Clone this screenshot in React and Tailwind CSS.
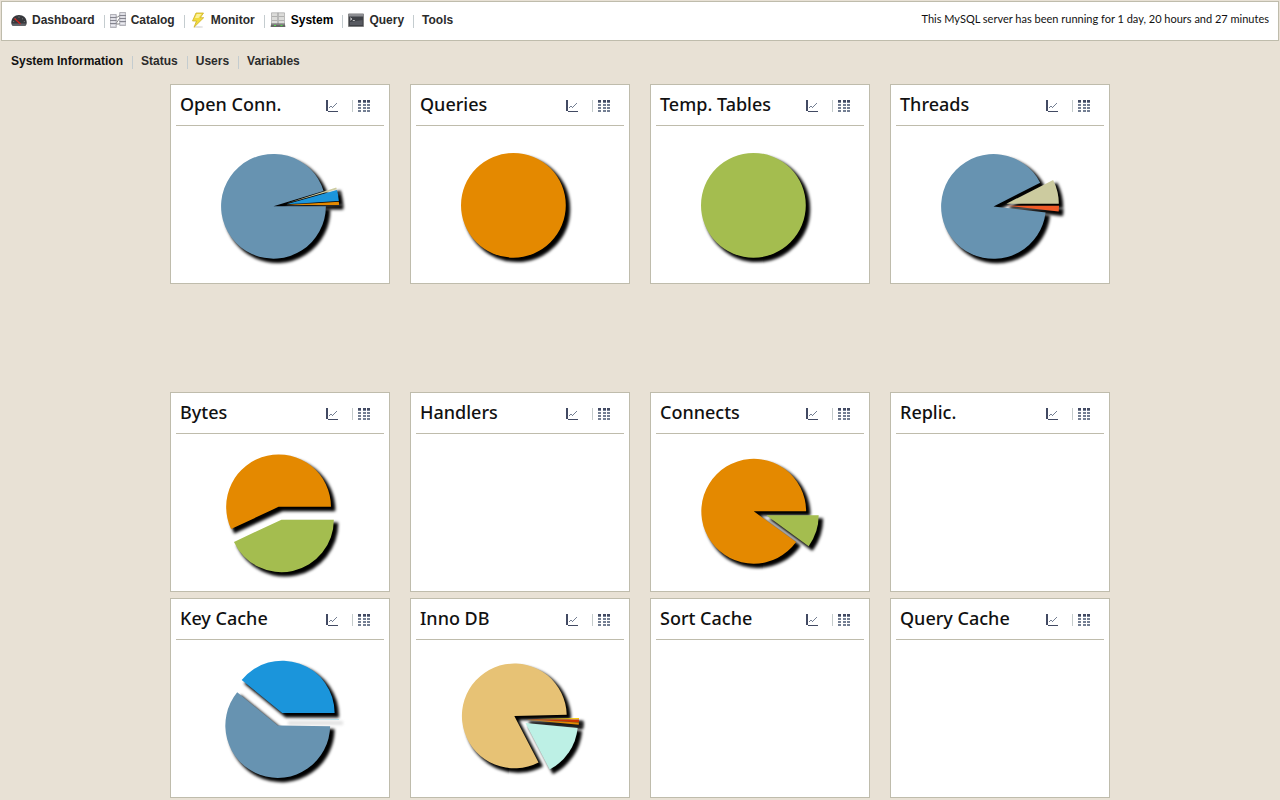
const CENTER_X = 110;
const CENTER_Y = 121.3;
const RADIUS = 52.4;
const EXPLODE = 6.6;

const COLORS = {
  steel: '#6793b1',
  orange: '#e48900',
  green: '#a4bd4f',
  sky: '#1b95db',
  khaki: '#cccb9f',
  red: '#f15b27',
  tan: '#e7c275',
  mint: '#bdf0e5',
  yellow: '#f5c800',
  brick: '#cc3300',
  cyan: '#a5dcea',
};

/* Slices are [start, end, color, faint], in degrees clockwise from three o'clock. */
const ROWS = [
  [
    { title: 'Open Conn.', slices: [[0, 343, 'steel'], [-17.6, -15.6, 'khaki'], [-15.6, -3.6, 'sky'], [-3.6, 0, 'orange']] },
    { title: 'Queries', slices: [[0, 360, 'orange']] },
    { title: 'Temp. Tables', slices: [[0, 360, 'green']] },
    { title: 'Threads', slices: [[6.5, 333, 'steel'], [-27, 0, 'khaki'], [0, 6.5, 'red']] },
  ],
  [
    { title: 'Bytes', slices: [[155, 360, 'orange'], [0, 155, 'green']] },
    { title: 'Handlers', slices: [] },
    { title: 'Connects', slices: [[36, 360, 'orange'], [0, 36, 'green']] },
    { title: 'Replic.', slices: [] },
  ],
  [
    { title: 'Key Cache', slices: [[0.7, 219.3, 'steel'], [219.3, 360, 'sky'], [0, 0.7, 'cyan', true]] },
    { title: 'Inno DB', slices: [[62.5, 358.6, 'tan'], [-1.4, 0, 'yellow'], [0, 3, 'brick'], [3, 5.5, 'orange'], [5.5, 62.5, 'mint']] },
    { title: 'Sort Cache', slices: [] },
    { title: 'Query Cache', slices: [] },
  ],
];

function slicePath([start, end]) {
  const rad = (d) => (d * Math.PI) / 180;
  const mid = rad((start + end) / 2);
  const cx = CENTER_X + EXPLODE * Math.cos(mid);
  const cy = CENTER_Y + EXPLODE * Math.sin(mid);
  if (end - start >= 360) {
    return `M${cx - RADIUS} ${cy}a${RADIUS} ${RADIUS} 0 1 1 ${RADIUS * 2} 0a${RADIUS} ${RADIUS} 0 1 1 ${-RADIUS * 2} 0z`;
  }
  const x1 = cx + RADIUS * Math.cos(rad(start));
  const y1 = cy + RADIUS * Math.sin(rad(start));
  const x2 = cx + RADIUS * Math.cos(rad(end));
  const y2 = cy + RADIUS * Math.sin(rad(end));
  const large = end - start > 180 ? 1 : 0;
  return `M${cx} ${cy}L${x1} ${y1}A${RADIUS} ${RADIUS} 0 ${large} 1 ${x2} ${y2}z`;
}

function Pie({ slices, title }) {
  const solid = slices.filter((s) => !s[3]);
  return (
    <svg viewBox="6 42 208 150" className="mx-auto block h-[150px] w-[208px]" role="img" aria-label={title}>
      <defs>
        <filter id="soften" filterUnits="userSpaceOnUse" x="0" y="40" width="220" height="160">
          <feGaussianBlur stdDeviation="1.5" />
        </filter>
      </defs>
      {solid.map((s, i) => (
        <path
          key={i}
          d={slicePath(s)}
          transform="translate(3.6 3.6)"
          stroke="#000"
          strokeWidth="1.6"
          strokeLinejoin="round"
          filter="url(#soften)"
        />
      ))}
      {slices.some((s) => s[3]) && (
        <path d="M118 123H173V127H118z" fill="#e2e2e2" filter="url(#soften)" />
      )}
      {slices.map((s, i) => (
        <path key={i} d={slicePath(s)} fill={COLORS[s[2]]} />
      ))}
    </svg>
  );
}

function ChartIcon() {
  return (
    <svg viewBox="0 0 12 12" className="size-3" shapeRendering="crispEdges" aria-hidden="true">
      <path d="M0 0h2v11H0zM2 11h10v1H2z" fill="#424a63" />
      <path d="M3 7h1v1H3zM4 6h2v1H4zM6 7h1v1H6zM7 6h1v1H7zM8 5h1v1H8zM9 4h1v1H9zM10 3h1v1h-1z" fill="#747f93" />
    </svg>
  );
}

function TableIcon() {
  return (
    <svg viewBox="0 0 12 12" className="size-3" shapeRendering="crispEdges" aria-hidden="true">
      <path d="M0 0h3v2H0zM5 0h3v2H5zM9 0h3v2H9z" fill="#424a63" />
      <path
        d="M0 2h3v1H0zM5 2h3v1H5zM9 2h3v1H9zM0 4h3v2H0zM5 4h3v2H5zM9 4h3v2H9zM0 7h3v2H0zM5 7h3v2H5zM9 7h3v2H9zM0 10h3v2H0zM5 10h3v2H5zM9 10h3v2H9z"
        fill="#747f93"
      />
    </svg>
  );
}

function Card({ title, slices }) {
  return (
    <section className="h-[200px] w-[220px] border border-[#bfbcac] bg-white px-[5px]">
      <header className="flex h-[41px] items-center border-b border-[#bfbcac] pr-[14px] pl-1">
        <h2 className="grow pb-[2px] font-['Noto_Sans',sans-serif] text-lg leading-6 font-medium text-[#111]">{title}</h2>
        <button type="button" aria-label={`${title} chart`} className="mt-[2px] mr-[14px]">
          <ChartIcon />
        </button>
        <button type="button" aria-label={`${title} table`} className="mt-[2px] border-l border-[#c5cccc] pl-[5px]">
          <TableIcon />
        </button>
      </header>
      {slices.length > 0 && <Pie slices={slices} title={title} />}
    </section>
  );
}

function GaugeIcon() {
  return (
    <svg viewBox="0 0 16 16" className="size-4" aria-hidden="true">
      <path d="M0.3 10.500C0.3 6 3.6 3 8 3s7.700 3 7.700 7.500c0 1.500-.5 2.500-1.200 3.200H1.500C.8 13 .3 12 .3 10.500z" fill="#36383c" />
      <path d="M1 11.500h14l-.6 2H1.600z" fill="#606368" />
      <path d="M2.200 9.500l1 .2M4 6.300l.8.800M8 4.500v1.200M12 6.300l-.8.800M13.800 9.500l-1 .2" stroke="#999" strokeWidth=".8" />
      <path d="M3.500 6.500l6 5.500" stroke="#d8201c" strokeWidth="1.200" />
    </svg>
  );
}

function CatalogIcon() {
  return (
    <svg viewBox="0 0 16 16" className="size-4" aria-hidden="true">
      <path d="M6 11.500L10.500 5M6 5h1.500l3-2M6 12h3l2-1" fill="none" stroke="#777" strokeWidth=".9" />
      <path d="M.3 2.500h6v13h-6zM9.700.5h6v13h-6z" fill="#d3d3da" stroke="#8f8f98" strokeWidth=".6" />
      <path d="M0 5.500h6.500M0 8.500h6.500M0 11.500h6.500M9.500 3.500h6.500M9.500 6.500h6.500M9.500 9.500h6.500" stroke="#85858f" />
      <path d="M1 4h4M1 7h4M1 10h4M1 13.500h4M10.500 2h4M10.500 5h4M10.500 8h4M10.500 11.500h4" stroke="#ededf3" />
    </svg>
  );
}

function BoltIcon() {
  return (
    <svg viewBox="0 0 16 16" className="size-4" aria-hidden="true">
      <ellipse cx="8.500" cy="15" rx="4.500" ry=".9" fill="#e2e2e2" />
      <path d="M6 1h7.500l-3.200 4.700h3.400L4 15.300l2.500-6.300H2.500z" fill="#f2dc3c" stroke="#cdb02a" strokeWidth=".8" strokeLinejoin="round" />
      <path d="M6.800 2h4.700L8.500 6H5z" fill="#fbf19a" />
    </svg>
  );
}

function ServerIcon() {
  return (
    <svg viewBox="0 0 16 16" className="size-4" aria-hidden="true">
      <path d="M1.500.8H8v11.500H1.500zM8 .8h6.500v11.500H8z" fill="#dcdcda" stroke="#999" strokeWidth=".6" />
      <path d="M2 4.500h5.500M8.500 4.500h5.500M2 8.500h5.500M8.500 8.500h5.500" stroke="#b1b1af" />
      <path d="M1.200 11.500h13.600l.6 3.500H.6z" fill="#666" />
      <path d="M1.200 12.500h13.600" stroke="#8c8c8c" strokeWidth=".7" />
      <path d="M4 13.500h2M10.500 13.500h2" stroke="#50dc46" />
    </svg>
  );
}

function TerminalIcon() {
  return (
    <svg viewBox="0 0 16 16" className="size-4" aria-hidden="true">
      <path d="M.5 2h15v12.500H.5z" fill="#3f4146" stroke="#777" strokeWidth=".8" />
      <path d="M.4 1.800h15.200v2.700H.4z" fill="#8d8e92" />
      <path d="M2 10l12.500-2v5H2z" fill="#585a61" />
      <path d="M2 5.800l2 1.200-2 1.200M4.800 8.500h2" fill="none" stroke="#e5e5e5" strokeWidth=".8" />
    </svg>
  );
}

const NAV = [
  { label: 'Dashboard', Icon: GaugeIcon },
  { label: 'Catalog', Icon: CatalogIcon },
  { label: 'Monitor', Icon: BoltIcon },
  { label: 'System', Icon: ServerIcon, active: true },
  { label: 'Query', Icon: TerminalIcon },
  { label: 'Tools' },
];

const SUBNAV = ['System Information', 'Status', 'Users', 'Variables'];

export default function App() {
  return (
    <div className="min-h-screen bg-[#e8e1d5] p-px font-['Liberation_Sans',Arial,sans-serif] text-xs font-bold text-[#2b2b2b]">
      <div className="flex min-h-10 items-start justify-between border border-[#bfbcac] bg-white px-[9px]">
        <nav aria-label="Main" className="flex pt-[10px]">
          {NAV.map(({ label, Icon, active }, i) => (
            <a
              key={label}
              href="#"
              className={`flex h-4 items-center gap-[5px] ${i > 0 ? 'ml-[9px]' : ''} ${active ? 'text-black' : ''}`}
            >
              {i > 0 && <span className={`mt-[3px] h-[13px] w-px bg-[#c4cccf] ${Icon ? '' : 'mr-[3px]'}`} />}
              {Icon && <Icon />}
              {label}
            </a>
          ))}
        </nav>
        <p className="pt-[9px] font-[Lato,sans-serif] text-[11px] leading-4 font-normal text-[#111]">
          This MySQL server has been running for 1 day, 20 hours and 27 minutes
        </p>
      </div>
      <nav aria-label="System" className="flex px-[10px] pt-3">
        {SUBNAV.map((label, i) => (
          <a key={label} href="#" className={`flex h-4 items-center ${i > 0 ? 'ml-[9px]' : 'text-[#111]'}`}>
            {i > 0 && <span className="mt-[3px] mr-2 h-[13px] w-px bg-[#c4cccf]" />}
            {label}
          </a>
        ))}
      </nav>
      <main className="flex flex-col items-center gap-[6px] pt-[15px] pb-px">
        {ROWS.map((row, i) => (
          <div key={i} className={`flex flex-wrap justify-center gap-x-5 gap-y-[6px] ${i === 0 ? 'mb-[102px]' : ''}`}>
            {row.map((card) => (
              <Card key={card.title} {...card} />
            ))}
          </div>
        ))}
      </main>
    </div>
  );
}
